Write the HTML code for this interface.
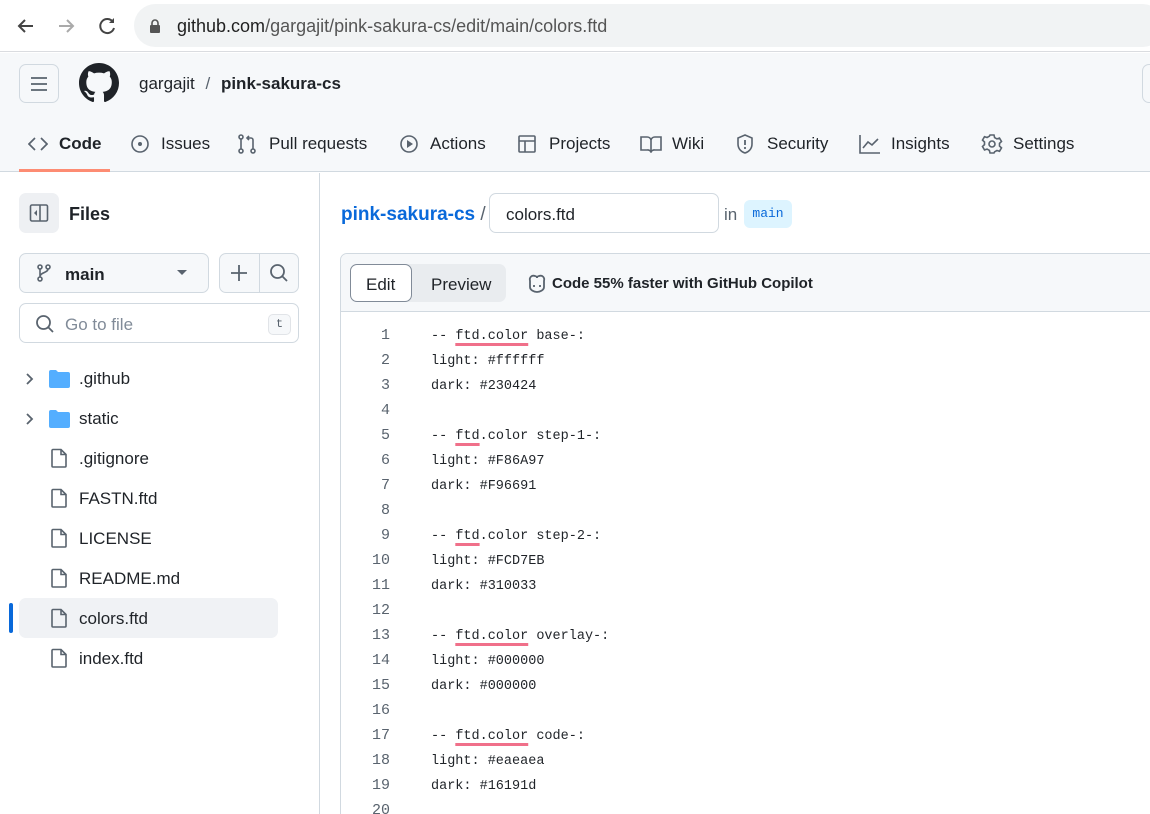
<!DOCTYPE html>
<html style="width:1150px;height:814px;overflow:hidden"><head><meta charset="utf-8"><style>
*{margin:0;padding:0;box-sizing:border-box}
body{width:1150px;height:814px;overflow:hidden;background:#fff;font-family:"Liberation Sans",sans-serif;color:#1f2328;position:relative}
.a{position:absolute}
.t{font-size:17px;white-space:nowrap}
svg{display:block}
.mono{font-family:"Liberation Mono",monospace}
.ln{position:absolute;left:340px;width:50px;text-align:right;font-size:15px;color:#59636e;font-family:"Liberation Mono",monospace}
.cd{position:absolute;left:431px;font-size:13.5px;font-family:"Liberation Mono",monospace;color:#1f2328;white-space:pre}
.u{text-decoration:underline;text-decoration-color:#f0708a;text-decoration-thickness:3px;text-underline-offset:4px}
</style></head><body>
<div class="a" style="left:0;top:0;width:1150px;height:52px;background:#fff;border-bottom:1px solid #dadce0"></div>
<svg class="a" style="left:14px;top:14px" width="24" height="24" viewBox="0 0 24 24"><path d="M19 12H5M11 6l-6 6 6 6" stroke="#444" stroke-width="2" fill="none"/></svg>
<svg class="a" style="left:54px;top:14px" width="24" height="24" viewBox="0 0 24 24"><path d="M5 12h14M13 6l6 6-6 6" stroke="#aaa" stroke-width="2" fill="none"/></svg>
<svg class="a" style="left:95px;top:14px" width="24" height="24" viewBox="0 0 24 24"><path d="M18 8A7 7 0 1 0 19 14" stroke="#444" stroke-width="2" fill="none"/><path d="M19 4v5h-5" fill="#444"/></svg>
<div class="a" style="left:134px;top:4px;width:1030px;height:43px;border-radius:22px;background:#f1f3f4"></div>
<svg class="a" style="left:149px;top:19px" width="12" height="14" viewBox="0 0 12 14"><rect x="1" y="6" width="10" height="8" rx="1" fill="#555"/><path d="M3 6V4a3 3 0 0 1 6 0v2" stroke="#555" stroke-width="1.6" fill="none"/></svg>
<div class="a t" style="left:177px;top:16px;font-size:18px;color:#555"><span style="color:#1f1f1f">github.com</span>/gargajit/pink-sakura-cs/edit/main/colors.ftd</div>
<div class="a" style="left:0;top:53px;width:1150px;height:119px;background:#f6f8fa;border-bottom:1px solid #d1d9e0"></div>
<div class="a" style="left:19px;top:64px;width:40px;height:39px;border:1px solid #d1d9e0;border-radius:7px;background:#f6f8fa"></div>
<svg class="a" style="left:29px;top:74px" width="20" height="20" viewBox="0 0 20 20"><path d="M2 4h16M2 10h16M2 16h16" stroke="#59636e" stroke-width="1.8"/></svg>
<svg class="a" style="left:79px;top:63px" width="40" height="40" viewBox="0 0 16 16"><path fill="#1f2328" d="M8 0C3.58 0 0 3.58 0 8c0 3.540 2.290 6.530 5.470 7.590.4.07.55-.17.55-.38 0-.19-.01-.82-.01-1.490-2.010.37-2.530-.49-2.690-.94-.09-.23-.48-.94-.82-1.130-.28-.15-.68-.52-.01-.53.63-.01 1.080.58 1.230.82.72 1.210 1.870.87 2.330.66.07-.52.28-.87.51-1.070-1.780-.2-3.640-.89-3.640-3.950 0-.87.31-1.590.82-2.150-.08-.2-.36-1.020.08-2.120 0 0 .67-.21 2.200.82.64-.18 1.320-.27 2-.27.68 0 1.360.09 2 .27 1.530-1.040 2.200-.82 2.200-.82.44 1.100.16 1.920.08 2.120.51.56.82 1.270.82 2.150 0 3.070-1.870 3.750-3.650 3.950.29.25.54.73.54 1.480 0 1.070-.01 1.930-.01 2.200 0 .21.15.46.55.38A8.013 8.013 0 0016 8c0-4.420-3.580-8-8-8z"/></svg>
<div class="a t" style="left:139px;top:74px">gargajit <span style="color:#59636e;margin:0 6px">/</span> <b>pink-sakura-cs</b></div>
<div class="a" style="left:1142px;top:64px;width:20px;height:39px;border:1px solid #d1d9e0;border-radius:7px"></div>
<div class="a" style="left:19px;top:169px;width:91px;height:3px;background:#fd8c73"></div>
<svg class="a" style="left:28px;top:135px" width="20" height="18" viewBox="0 0 20 18"><path d="M7 3L1 9l6 6M13 3l6 6-6 6" stroke="#59636e" stroke-width="1.7" fill="none"/></svg>
<div class="a t" style="left:59px;top:134px;font-weight:bold">Code</div>
<svg class="a" style="left:130px;top:134px" width="20" height="20" viewBox="0 0 20 20"><circle cx="10" cy="10" r="8" stroke="#59636e" stroke-width="1.6" fill="none"/><circle cx="10" cy="10" r="2" fill="#59636e"/></svg>
<div class="a t" style="left:161px;top:134px">Issues</div>
<svg class="a" style="left:237px;top:134px" width="20" height="20" viewBox="0 0 20 20"><g stroke="#59636e" stroke-width="1.6" fill="none"><circle cx="4" cy="3" r="2"/><circle cx="4" cy="17" r="2"/><circle cx="16" cy="17" r="2"/><path d="M4 5v10M16 15V6a2 2 0 0 0-2-2h-4M12 2l-2 2 2 2"/></g></svg>
<div class="a t" style="left:269px;top:134px">Pull requests</div>
<svg class="a" style="left:399px;top:134px" width="20" height="20" viewBox="0 0 20 20"><circle cx="10" cy="10" r="8" stroke="#59636e" stroke-width="1.6" fill="none"/><path d="M8 6v8l6-4z" fill="#59636e"/></svg>
<div class="a t" style="left:430px;top:134px">Actions</div>
<svg class="a" style="left:517px;top:134px" width="20" height="20" viewBox="0 0 20 20"><g stroke="#59636e" stroke-width="1.6" fill="none"><rect x="2" y="2" width="16" height="16" rx="1"/><path d="M2 7h16M8 7v11"/></g></svg>
<div class="a t" style="left:549px;top:134px">Projects</div>
<svg class="a" style="left:640px;top:135px" width="22" height="18" viewBox="0 0 22 18"><path d="M1 2h6a4 4 0 0 1 4 3 4 4 0 0 1 4-3h6v13h-6a4 4 0 0 0-4 2 4 4 0 0 0-4-2H1zM11 5v12" stroke="#59636e" stroke-width="1.6" fill="none"/></svg>
<div class="a t" style="left:672px;top:134px">Wiki</div>
<svg class="a" style="left:735px;top:133px" width="20" height="22" viewBox="0 0 20 22"><path d="M10 2l7 3v6c0 5-3.5 8-7 9-3.5-1-7-4-7-9V5z" stroke="#59636e" stroke-width="1.6" fill="none"/><path d="M10 7v5" stroke="#59636e" stroke-width="1.8"/><circle cx="10" cy="15" r="1.1" fill="#59636e"/></svg>
<div class="a t" style="left:767px;top:134px">Security</div>
<svg class="a" style="left:859px;top:134px" width="22" height="20" viewBox="0 0 22 20"><path d="M1 1v18h20M4 14l5-6 4 3 6-6" stroke="#59636e" stroke-width="1.6" fill="none"/></svg>
<div class="a t" style="left:891px;top:134px">Insights</div>
<svg class="a" style="left:981px;top:133px" width="22" height="22" viewBox="0 0 22 22"><g stroke="#59636e" stroke-width="1.6" fill="none"><circle cx="11" cy="11" r="3"/><path d="M9 2h4l.6 2.6 2.3 1.3 2.6-.8 2 3.4-2 1.9v2.6l2 1.9-2 3.4-2.6-.8-2.3 1.3L13 20H9l-.6-2.6-2.3-1.3-2.6.8-2-3.4 2-1.9V9L1.5 7.1l2-3.4 2.6.8 2.3-1.3z"/></g></svg>
<div class="a t" style="left:1013px;top:134px">Settings</div>
<div class="a" style="left:319px;top:173px;width:1px;height:641px;background:#d1d9e0"></div>
<div class="a" style="left:19px;top:193px;width:40px;height:40px;border-radius:7px;background:#eef0f3"></div>
<svg class="a" style="left:29px;top:203px" width="20" height="20" viewBox="0 0 20 20"><rect x="1.5" y="2" width="17" height="16" rx="1.5" stroke="#59636e" stroke-width="1.6" fill="none"/><path d="M11 2v16" stroke="#59636e" stroke-width="1.6"/><path d="M8 7l-3 3 3 3z" fill="#59636e"/></svg>
<div class="a t" style="left:69px;top:204px;font-size:18px;font-weight:600">Files</div>
<div class="a" style="left:19px;top:253px;width:190px;height:40px;border:1px solid #d1d9e0;border-radius:7px;background:#f6f8fa"></div>
<svg class="a" style="left:35px;top:264px" width="18" height="18" viewBox="0 0 18 18"><g stroke="#59636e" stroke-width="1.6" fill="none"><circle cx="5" cy="3" r="2"/><circle cx="5" cy="15" r="2"/><circle cx="13" cy="3" r="2"/><path d="M5 5v8M13 5c0 4-8 3-8 8"/></g></svg>
<div class="a t" style="left:65px;top:265px;font-weight:600">main</div>
<svg class="a" style="left:177px;top:270px" width="10" height="6" viewBox="0 0 10 6"><path d="M0 0h10L5 5z" fill="#59636e"/></svg>
<div class="a" style="left:219px;top:253px;width:80px;height:40px;border:1px solid #d1d9e0;border-radius:7px;background:#f6f8fa"></div>
<div class="a" style="left:259px;top:254px;width:1px;height:38px;background:#d1d9e0"></div>
<svg class="a" style="left:230px;top:264px" width="18" height="18" viewBox="0 0 18 18"><path d="M9 1v16M1 9h16" stroke="#59636e" stroke-width="1.8"/></svg>
<svg class="a" style="left:269px;top:263px" width="20" height="20" viewBox="0 0 20 20"><circle cx="8.5" cy="8.5" r="6.5" stroke="#59636e" stroke-width="1.8" fill="none"/><path d="M13 13l5 5" stroke="#59636e" stroke-width="1.8"/></svg>
<div class="a" style="left:19px;top:303px;width:280px;height:40px;border:1px solid #d1d9e0;border-radius:7px"></div>
<svg class="a" style="left:35px;top:314px" width="20" height="20" viewBox="0 0 20 20"><circle cx="8.5" cy="8.5" r="6.5" stroke="#59636e" stroke-width="1.8" fill="none"/><path d="M13 13l5 5" stroke="#59636e" stroke-width="1.8"/></svg>
<div class="a t" style="left:65px;top:315px;color:#818b98">Go to file</div>
<div class="a mono" style="left:268px;top:314px;width:23px;height:21px;border:1px solid #e1e4e8;border-radius:5px;background:#f6f8fa;font-size:12px;text-align:center;line-height:19px;color:#59636e">t</div>
<div class="a" style="left:19px;top:598px;width:259px;height:40px;border-radius:7px;background:#f0f2f5"></div>
<div class="a" style="left:9px;top:603px;width:4px;height:30px;border-radius:2px;background:#0969da"></div>
<svg class="a" style="left:24px;top:372px" width="12" height="14" viewBox="0 0 12 14"><path d="M3 2l5 5-5 5" stroke="#59636e" stroke-width="1.8" fill="none"/></svg>
<svg class="a" style="left:24px;top:412px" width="12" height="14" viewBox="0 0 12 14"><path d="M3 2l5 5-5 5" stroke="#59636e" stroke-width="1.8" fill="none"/></svg>
<svg class="a" style="left:49px;top:370px" width="21" height="18" viewBox="0 0 21 18"><path d="M0 2a2 2 0 0 1 2-2h5l2 2h10a2 2 0 0 1 2 2v12a2 2 0 0 1-2 2H2a2 2 0 0 1-2-2z" fill="#54aeff"/></svg>
<svg class="a" style="left:49px;top:410px" width="21" height="18" viewBox="0 0 21 18"><path d="M0 2a2 2 0 0 1 2-2h5l2 2h10a2 2 0 0 1 2 2v12a2 2 0 0 1-2 2H2a2 2 0 0 1-2-2z" fill="#54aeff"/></svg>
<div class="a t" style="left:79px;top:369px">.github</div>
<div class="a t" style="left:79px;top:409px">static</div>
<div class="a t" style="left:79px;top:449px">.gitignore</div>
<div class="a t" style="left:79px;top:489px">FASTN.ftd</div>
<div class="a t" style="left:79px;top:529px">LICENSE</div>
<div class="a t" style="left:79px;top:569px">README.md</div>
<div class="a t" style="left:79px;top:609px">colors.ftd</div>
<div class="a t" style="left:79px;top:649px">index.ftd</div>
<svg width="0" height="0" style="position:absolute"><defs><g id="f"><path d="M2 1.5h8l5 5v11.5a1 1 0 0 1-1 1H2a1 1 0 0 1-1-1V2.5a1 1 0 0 1 1-1zM10 1.5v5h5" stroke="#59636e" stroke-width="1.6" fill="none"/></g></defs></svg>
<svg class="a" style="left:51px;top:448px" width="17" height="21"><use href="#f"/></svg>
<svg class="a" style="left:51px;top:488px" width="17" height="21"><use href="#f"/></svg>
<svg class="a" style="left:51px;top:528px" width="17" height="21"><use href="#f"/></svg>
<svg class="a" style="left:51px;top:568px" width="17" height="21"><use href="#f"/></svg>
<svg class="a" style="left:51px;top:608px" width="17" height="21"><use href="#f"/></svg>
<svg class="a" style="left:51px;top:648px" width="17" height="21"><use href="#f"/></svg>
<div class="a t" style="left:341px;top:204px;font-size:19px;color:#0969da;font-weight:600">pink-sakura-cs <span style="color:#59636e;font-weight:normal">/</span></div>
<div class="a" style="left:489px;top:193px;width:230px;height:40px;border:1px solid #d1d9e0;border-radius:7px"></div>
<div class="a t" style="left:506px;top:205px">colors.ftd</div>
<div class="a t" style="left:724px;top:205px;color:#59636e">in</div>
<div class="a mono" style="left:744px;top:200px;width:48px;height:28px;border-radius:6px;background:#ddf4ff;color:#0969da;font-size:13px;text-align:center;line-height:28px">main</div>
<div class="a" style="left:340px;top:253px;width:820px;height:600px;border:1px solid #d1d9e0;border-radius:7px"></div>
<div class="a" style="left:341px;top:254px;width:820px;height:58px;background:#f6f8fa;border-bottom:1px solid #d1d9e0;border-radius:7px 7px 0 0"></div>
<div class="a" style="left:350px;top:264px;width:156px;height:38px;border-radius:7px;background:#e9ecef"></div>
<div class="a" style="left:350px;top:264px;width:62px;height:38px;border:1px solid #818b98;border-radius:7px;background:#fff"></div>
<div class="a t" style="left:366px;top:275px">Edit</div>
<div class="a t" style="left:431px;top:275px;color:#1f2328">Preview</div>
<svg class="a" style="left:527px;top:274px" width="20" height="19" viewBox="0 0 20 19"><path d="M3 7c-1-4 2-6 5-5 1 0 2 1 2 2 0-1 1-2 2-2 3-1 6 1 5 5v6c0 3-4 5-7 5s-7-2-7-5z" stroke="#59636e" stroke-width="1.8" fill="none"/><path d="M7 11v2M13 11v2" stroke="#59636e" stroke-width="1.8"/></svg>
<div class="a t" style="left:552px;top:275px;font-size:15px;font-weight:600">Code 55% faster with GitHub Copilot</div>
<div class="ln" style="top:327px">1</div><div class="cd" style="top:329px">-- <span class="u">ftd.color</span> base-:</div>
<div class="ln" style="top:352px">2</div><div class="cd" style="top:354px">light: #ffffff</div>
<div class="ln" style="top:377px">3</div><div class="cd" style="top:379px">dark: #230424</div>
<div class="ln" style="top:402px">4</div>
<div class="ln" style="top:427px">5</div><div class="cd" style="top:429px">-- <span class="u">ftd</span>.color step-1-:</div>
<div class="ln" style="top:452px">6</div><div class="cd" style="top:454px">light: #F86A97</div>
<div class="ln" style="top:477px">7</div><div class="cd" style="top:479px">dark: #F96691</div>
<div class="ln" style="top:502px">8</div>
<div class="ln" style="top:527px">9</div><div class="cd" style="top:529px">-- <span class="u">ftd</span>.color step-2-:</div>
<div class="ln" style="top:552px">10</div><div class="cd" style="top:554px">light: #FCD7EB</div>
<div class="ln" style="top:577px">11</div><div class="cd" style="top:579px">dark: #310033</div>
<div class="ln" style="top:602px">12</div>
<div class="ln" style="top:627px">13</div><div class="cd" style="top:629px">-- <span class="u">ftd.color</span> overlay-:</div>
<div class="ln" style="top:652px">14</div><div class="cd" style="top:654px">light: #000000</div>
<div class="ln" style="top:677px">15</div><div class="cd" style="top:679px">dark: #000000</div>
<div class="ln" style="top:702px">16</div>
<div class="ln" style="top:727px">17</div><div class="cd" style="top:729px">-- <span class="u">ftd.color</span> code-:</div>
<div class="ln" style="top:752px">18</div><div class="cd" style="top:754px">light: #eaeaea</div>
<div class="ln" style="top:777px">19</div><div class="cd" style="top:779px">dark: #16191d</div>
<div class="ln" style="top:802px">20</div>
</body></html>
